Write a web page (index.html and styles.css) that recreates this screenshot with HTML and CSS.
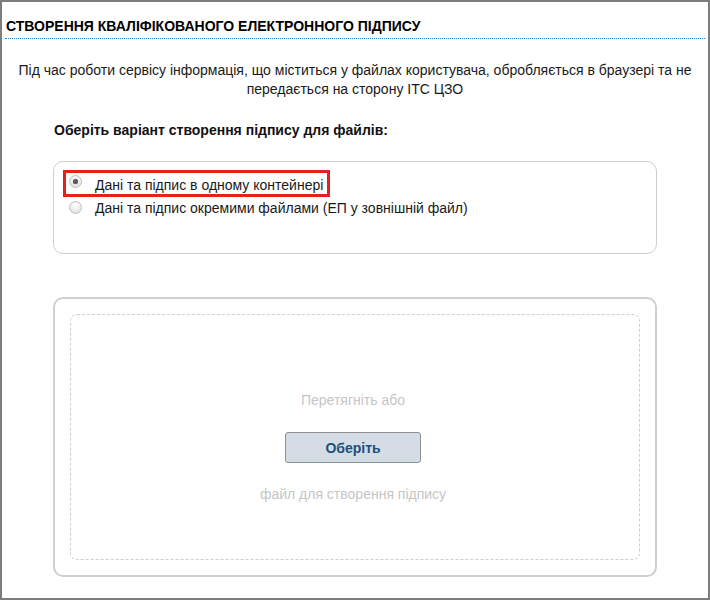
FILE: index.html
```html
<!DOCTYPE html>
<html lang="uk">
<head>
<meta charset="utf-8">
<title>Створення кваліфікованого електронного підпису</title>
<link rel="stylesheet" href="styles.css">
</head>
<body>
<div class="frame">
  <h1 class="title">СТВОРЕННЯ КВАЛІФІКОВАНОГО ЕЛЕКТРОННОГО ПІДПИСУ</h1>
  <p class="intro">Під час роботи сервісу інформація, що міститься у файлах користувача, обробляється в браузері та не<br>передається на сторону ІТС ЦЗО</p>
  <div class="label">Оберіть варіант створення підпису для файлів:</div>
  <div class="options">
    <div class="option option-highlight">
      <span class="radio radio-checked"></span>
      <span class="option-text">Дані та підпис в одному контейнері</span>
    </div>
    <div class="option option-plain">
      <span class="radio"></span>
      <span class="option-text">Дані та підпис окремими файлами (ЕП у зовнішній файл)</span>
    </div>
  </div>
  <div class="dropzone">
    <div class="dropzone-inner">
      <div class="hint">Перетягніть або</div>
      <button class="choose" type="button">Оберіть</button>
      <div class="hint hint-bottom">файл для створення підпису</div>
    </div>
  </div>
</div>
</body>
</html>
```

FILE: styles.css
```css
html, body {
  margin: 0;
  padding: 0;
  background: #fff;
}

body {
  font-family: "Liberation Sans", Arial, sans-serif;
  color: #1a1a1a;
}

.frame {
  width: 710px;
  height: 600px;
  box-sizing: border-box;
  border: 2px solid #7d7d7d;
  display: flex;
  flex-direction: column;
}

.title {
  margin: 0 3px;
  padding: 16px 0 4px 1px;
  font-size: 14px;
  line-height: 16px;
  font-weight: bold;
  color: #000;
  border-bottom: 1px dotted #2a78b4;
}

.intro {
  margin: 22px 0 0;
  padding: 0 8px;
  text-align: center;
  font-size: 14px;
  line-height: 19px;
  color: #1a1a1a;
}

.label {
  margin: 23px 0 0 52px;
  font-size: 14px;
  line-height: 16px;
  font-weight: bold;
  color: #111;
}

.options {
  margin: 23px 51px 0;
  height: 93px;
  box-sizing: border-box;
  border: 1px solid #cfcfcf;
  border-radius: 10px;
  padding: 8px 0 0 9px;
  display: flex;
  flex-direction: column;
  align-items: flex-start;
}

.option {
  display: flex;
  align-items: flex-start;
  font-size: 14px;
  line-height: 18px;
  color: #1a1a1a;
}

.option-highlight {
  border: 3px solid #e3211f;
  height: 21px;
  padding: 0 4px 0 3px;
}

.option-highlight .radio {
  margin-top: 2px;
}

.option-highlight .option-text {
  padding-top: 3px;
}

.option-plain {
  margin-top: 2px;
  padding-left: 6px;
}

.option-plain .radio {
  margin-top: 2px;
}

.radio {
  position: relative;
  flex: none;
  width: 13px;
  height: 13px;
  box-sizing: border-box;
  border: 1px solid #c2c2c2;
  border-radius: 50%;
  background: radial-gradient(circle at 50% 30%, #ffffff 0%, #f0f0f0 45%, #d6d6d6 100%);
  margin-right: 13px;
}

.radio-checked::after {
  content: "";
  position: absolute;
  left: 3px;
  top: 3px;
  width: 5px;
  height: 5px;
  border-radius: 50%;
  background: #5a5a5a;
  box-shadow: 0 0 1px #8a8a8a;
}

.dropzone {
  margin: 43px 51px 0;
  height: 280px;
  box-sizing: border-box;
  border: 2px solid #cfcfcf;
  border-radius: 10px;
  padding: 15px;
  display: flex;
}

.dropzone-inner {
  flex: 1;
  border: 1px dashed #cfcfcf;
  border-radius: 7px;
  display: flex;
  flex-direction: column;
  align-items: center;
  padding: 76px 4px 0 0;
}

.hint {
  font-size: 14px;
  line-height: 18px;
  color: #c6c6c6;
}

.choose {
  margin-top: 23px;
  width: 136px;
  height: 31px;
  box-sizing: border-box;
  border: 1px solid #8f8f8f;
  border-radius: 3px;
  background: #d4dce5;
  font-family: "Liberation Sans", Arial, sans-serif;
  font-size: 14px;
  font-weight: bold;
  color: #1f4f7d;
  padding: 0;
}

.hint-bottom {
  margin-top: 22px;
}
```
